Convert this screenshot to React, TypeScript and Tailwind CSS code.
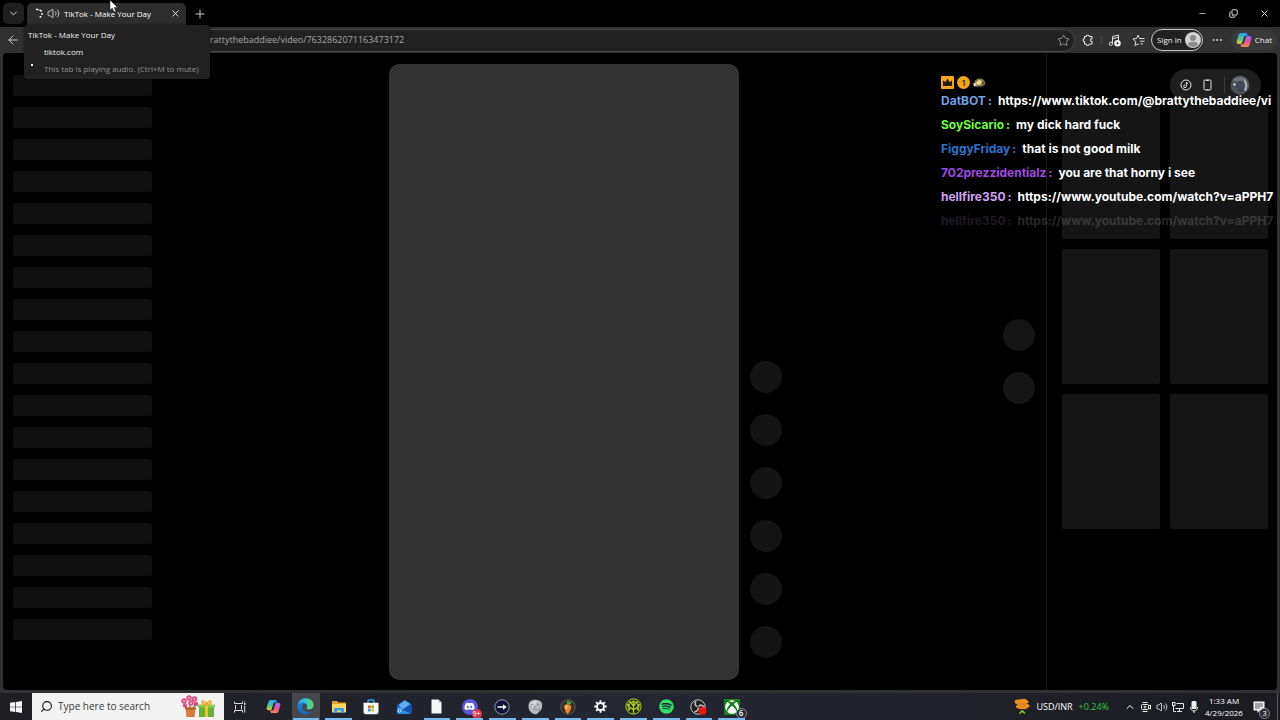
import type { ReactNode } from 'react';
import {
  ArrowLeft,
  ChevronDown,
  ChevronUp,
  Copy,
  Ellipsis,
  Minus,
  Plus,
  Search,
  Star,
  Volume2,
  X,
} from 'lucide-react';
import { FaDiscord, FaSpotify, FaXbox } from 'react-icons/fa';

const sidebarRows = Array.from({ length: 18 }, (_, i) => i);
const actionDots = Array.from({ length: 6 }, (_, i) => i);
const cards = Array.from({ length: 6 }, (_, i) => i);

interface ChatMessage {
  user: string;
  color: string;
  text: string;
  faded?: boolean;
}

const messages: ChatMessage[] = [
  { user: 'DatBOT', color: 'text-[#6ea0e0]', text: 'https://www.tiktok.com/@brattythebaddiee/vi' },
  { user: 'SoySicario', color: 'text-[#6dff3c]', text: 'my dick hard fuck' },
  { user: 'FiggyFriday', color: 'text-[#2a74cc]', text: 'that is not good milk' },
  { user: '702prezzidentialz', color: 'text-[#a04be0]', text: 'you are that horny i see' },
  { user: 'hellfire350', color: 'text-[#d2a0f5]', text: 'https://www.youtube.com/watch?v=aPPH7' },
  { user: 'hellfire350', color: 'text-[#d2a0f5]', text: 'https://www.youtube.com/watch?v=aPPH7', faded: true },
];

function CopilotIcon({ size }: { size: number }) {
  return (
    <svg width={size} height={size} viewBox="0 0 16 16">
      <defs>
        <linearGradient id="copilotLeft" x1="0" y1="0" x2="0" y2="1">
          <stop offset="0" stopColor="#2aa5f5" />
          <stop offset="0.55" stopColor="#4fc58a" />
          <stop offset="1" stopColor="#f2c52c" />
        </linearGradient>
        <linearGradient id="copilotRight" x1="0" y1="0" x2="0" y2="1">
          <stop offset="0" stopColor="#9a6cf5" />
          <stop offset="0.5" stopColor="#e8519b" />
          <stop offset="1" stopColor="#f98a4f" />
        </linearGradient>
      </defs>
      <path d="M5 1h4.5c1 0 1.6.7 1.9 1.7l.3 1.1H9.600c-1 0-1.500.5-1.800 1.400L6.200 10.600c-.3.9-.9 1.400-1.900 1.400H2.600C.9 12 .3 10.600.8 9l1.700-5.700C2.900 1.800 3.700 1 5 1z" fill="url(#copilotLeft)" />
      <path d="M11 15H6.500c-1 0-1.600-.7-1.900-1.700L4.300 12.200h2.100c1 0 1.500-.5 1.800-1.400l1.600-5.400c.3-.9.9-1.400 1.900-1.400h1.700c1.700 0 2.300 1.400 1.800 3l-1.700 5.700C13.100 14.200 12.300 15 11 15z" fill="url(#copilotRight)" />
      <path d="M9 1h.8c1 0 1.500.7 1.800 1.700l.4 1.300" fill="none" stroke="#2458c9" strokeWidth="1.200" />
    </svg>
  );
}

function WindowsIcon() {
  return (
    <svg width="12" height="12" viewBox="0 0 12 12" fill="#f5f5f5">
      <path d="M0 1.700 5.300 1v4.700H0zM6 .9 12 0v5.700H6zM0 6.300h5.300V11L0 10.300zM6 6.300h6V12l-6-.9z" />
    </svg>
  );
}

function TaskViewIcon() {
  return (
    <svg width="12" height="12" viewBox="0 0 12 12" fill="none" stroke="#dcdcdc" strokeWidth="1">
      <path d="M.5.5v2h8v-2M.5 11.500v-2h8v2M1.500 4v4.500M7.500 4v4.500M10.700 4.500v7M10.700.5v1" />
      <rect x="10" y="2" width="1.500" height="1.800" fill="#dcdcdc" stroke="none" />
    </svg>
  );
}

function EdgeIcon() {
  return (
    <svg width="17" height="17" viewBox="0 0 17 17">
      <defs>
        <linearGradient id="edgeTop" x1="0" y1="0.400" x2="1" y2="0.400">
          <stop offset="0" stopColor="#2aa0e8" />
          <stop offset="0.500" stopColor="#35c5cf" />
          <stop offset="1" stopColor="#5fdc5a" />
        </linearGradient>
        <linearGradient id="edgeLow" x1="0" y1="0" x2="1" y2="1">
          <stop offset="0" stopColor="#1d86d8" />
          <stop offset="1" stopColor="#1557a8" />
        </linearGradient>
      </defs>
      <path d="M.5 8.500C.5 3.500 4.200.3 8.700.3c4.800 0 7.900 3.300 7.900 6.800 0 2.600-2 4.300-4.300 4.300-1.900 0-2.800-.6-2.800-1.200 0-.4.700-.8.700-1.900 0-1.800-1.600-3.200-4-3.200-3 0-5.200 1.700-5.700 3.400z" fill="url(#edgeTop)" />
      <path d="M.5 8.500C.7 6.500 3 4.600 6 4.600c.9 0 1.700.2 2.400.5C6.300 5.800 5.300 7.500 5.300 9.300c0 3 2.800 4.900 5.900 4.900 1.500 0 2.900-.4 4-1.100-1.400 2.200-3.700 3.600-6.500 3.600C4.100 16.700.5 13.100.5 8.500z" fill="url(#edgeLow)" />
    </svg>
  );
}

function FolderIcon() {
  return (
    <svg width="16" height="14" viewBox="0 0 16 14">
      <path d="M1 2c0-.6.4-1 1-1h4l1.500 1.500H14c.6 0 1 .4 1 1V12H1z" fill="#e5a62b" />
      <path d="M1 4h14v8.500H1z" fill="#fbd665" />
      <path d="M3 13V9c0-.6.4-1 1-1h8c.6 0 1 .4 1 1v4h-3v-2.500H6V13z" fill="#3d9be0" />
    </svg>
  );
}

function StoreIcon() {
  return (
    <svg width="16" height="16" viewBox="0 0 16 16">
      <path d="M5 4V2c0-.6.4-1 1-1h4c.6 0 1 .4 1 1v2" fill="none" stroke="#2fa7e0" strokeWidth="1.400" />
      <path d="M.5 3.800h15V13c0 1.300-.9 2.200-2.200 2.200H2.700C1.400 15.200.5 14.300.5 13z" fill="#f6f6f6" />
      <path d="M5 6.500h2.700v2.700H5z" fill="#e8502a" />
      <path d="M8.300 6.500H11v2.700H8.300z" fill="#7db92a" />
      <path d="M5 9.800h2.700v2.700H5z" fill="#2da1e0" />
      <path d="M8.300 9.800H11v2.700H8.300z" fill="#f7b52c" />
    </svg>
  );
}

function MailIcon() {
  return (
    <svg width="16" height="16" viewBox="0 0 16 16">
      <path d="M1 6.500 8.500.8 15.500 5v9.500H1z" fill="#1b62c4" />
      <path d="M3 5.500 9 1.500 14 5l-8 6z" fill="#5db0f2" />
      <path d="M1 7.500 15.500 15H1z" fill="#2d8fe6" />
      <path d="M15.500 5.500V15L7 10.500z" fill="#134fae" />
      <circle cx="3.700" cy="11.600" r="3.200" fill="#1378d4" />
      <circle cx="3.700" cy="11.600" r="1.600" fill="none" stroke="#fff" strokeWidth="1" />
    </svg>
  );
}

function FileIcon() {
  return (
    <svg width="11" height="15" viewBox="0 0 11 15">
      <path d="M.5.5h7l3 3v11H.5z" fill="#f7f7f7" />
      <path d="M7.500.5v3h3z" fill="#bdbdbd" />
    </svg>
  );
}

function DiscordIcon() {
  return (
    <span className="relative flex h-4 w-4 items-center justify-center rounded-full bg-[#5b57d9]">
      <FaDiscord size={11} color="#fff" />
      <span className="absolute -right-1 -bottom-1 flex h-[10px] w-[10px] items-center justify-center rounded-full bg-[#d8344c] text-[7px] leading-none text-white">
        9+
      </span>
    </span>
  );
}

function ArrowCircleIcon() {
  return (
    <svg width="16" height="16" viewBox="0 0 16 16">
      <circle cx="8" cy="8" r="7.200" fill="#12123a" stroke="#a5a5c0" strokeWidth="0.900" />
      <path d="M3.500 8H11" stroke="#fff" strokeWidth="1.500" />
      <path d="M9 5.200 12.800 8 9 10.800z" fill="#fff" />
    </svg>
  );
}

function MaskIcon() {
  return (
    <svg width="15" height="16" viewBox="0 0 15 16">
      <path d="M2 2.500C4 .5 8 0 11 1.500c3 1 3.500 4 3 6.500-.3 2.500-2 4-3.500 5.500-1 1.500-3 2.300-4.500 1.500C3 14 .5 11 .5 7.500.5 5.500 1 3.500 2 2.500z" fill="#b9bbc0" />
      <path d="M3 4c2-1.800 4-2 6-1.500L7 6 4 8z" fill="#dcdde0" />
      <path d="M3 6c1-1 2.500-1 3 0M8.500 6c1-1 2.500-.8 3 0M5 11c1.300-1 3.200-1 4.500 0M7 7v2.500M11.500 9l-1 3" fill="none" stroke="#85888f" strokeWidth="0.900" />
    </svg>
  );
}

function FruitIcon() {
  return (
    <svg width="16" height="16" viewBox="0 0 16 16">
      <circle cx="8" cy="8" r="7.300" fill="#33312e" stroke="#68645d" strokeWidth="0.800" />
      <path d="M4.500 6.500c1.500-2 5.500-1.500 6.500.5.8 2-1.500 7-3.300 7.800C5.800 14 3.300 8.500 4.500 6.500z" fill="#f58220" />
      <path d="M5.500 7c1-.7 2-.5 2 .5s-.3 2.500-.8 3C6 10 5 8 5.500 7z" fill="#ffd1a0" />
      <path d="M7.500 5.500C6.500 3.500 7 1.800 8.500 1c.2 1.300.5 1.800 0 3 .8-1 2-1.800 3.300-1.500-.3 1.800-1.800 3-4.300 3z" fill="#59a93a" />
    </svg>
  );
}

function GearIcon() {
  return (
    <svg width="13" height="13" viewBox="0 0 16 16">
      <circle cx="8" cy="8" r="4.300" fill="none" stroke="#fff" strokeWidth="2.300" />
      <path d="M8 .4v3M8 12.600v3M.4 8h3M12.600 8h3M2.600 2.600l2.100 2.100M11.300 11.300l2.100 2.100M2.600 13.400l2.100-2.100M11.300 4.700l2.100-2.100" stroke="#fff" strokeWidth="2.300" />
    </svg>
  );
}

function TreeIcon() {
  return (
    <svg width="17" height="17" viewBox="0 0 17 17">
      <circle cx="8.500" cy="8.500" r="7.600" fill="#20280a" stroke="#b5d422" strokeWidth="1" />
      <path d="M8.500 15.500V5M8.500 12 4 8.500V5.500M8.500 12l4.500-3.500V5.500M8.500 8 6 5M8.500 8 11 5M4 8.500 2.500 9.500M13 8.500l1.500 1" fill="none" stroke="#b5d422" strokeWidth="1.200" />
      <g fill="#b5d422">
        <circle cx="8.500" cy="3.800" r="1.400" />
        <circle cx="5.300" cy="4.300" r="1.200" />
        <circle cx="11.700" cy="4.300" r="1.200" />
        <circle cx="3.300" cy="6.800" r="1.200" />
        <circle cx="13.700" cy="6.800" r="1.200" />
        <circle cx="4" cy="11.300" r="1.200" />
        <circle cx="13" cy="11.300" r="1.200" />
      </g>
    </svg>
  );
}

function ObsIcon() {
  return (
    <svg width="18" height="16" viewBox="0 0 18 16">
      <circle cx="8" cy="8" r="7.200" fill="#1f1f22" stroke="#c9c9c9" strokeWidth="1" />
      <path d="M7.500 7.500C5 7 4.300 4.500 6 2.300M8.500 7.500c1.500-2 4.200-1.700 5.500.5M8 8.500c.7 2.300-1 4.300-3.700 4.300" fill="none" stroke="#bdbdbd" strokeWidth="1.600" />
      <circle cx="12.500" cy="11.800" r="4" fill="#f01616" />
    </svg>
  );
}

function XboxIcon() {
  return (
    <span className="relative flex h-4 w-4 items-center justify-center bg-[#14801a]">
      <FaXbox size={14} color="#fff" />
      <span className="absolute -right-[7px] -bottom-1 flex h-[11px] w-[11px] items-center justify-center rounded-full border border-[#8b8b90] bg-[#2b2b31] text-[8px] leading-none font-semibold text-white">
        6
      </span>
    </span>
  );
}

function FlowersIcon() {
  return (
    <svg width="36" height="23" viewBox="0 0 36 23">
      <path d="M10 14V7M7 13 4 9M13 13l3-4" stroke="#4d9a3a" strokeWidth="1.300" />
      <g fill="#d94f83">
        <circle cx="4" cy="6" r="2.700" />
        <circle cx="9" cy="3" r="2.700" />
        <circle cx="14.500" cy="4" r="2.700" />
        <circle cx="11" cy="8" r="2.700" />
        <circle cx="5" cy="10.500" r="2.200" />
        <circle cx="16" cy="9" r="2.300" />
      </g>
      <g fill="#f5b3ca">
        <circle cx="4" cy="6" r="1" />
        <circle cx="9" cy="3" r="1" />
        <circle cx="14.500" cy="4" r="1" />
        <circle cx="11" cy="8" r="1" />
      </g>
      <path d="M5.500 12.500h10L14.500 22h-8z" fill="#d9793a" />
      <path d="M5 12.500h11v2H5z" fill="#b85c25" />
      <path d="M19 11h15v11H19z" fill="#64b13c" />
      <path d="M18 9.500h17v3H18z" fill="#88cc4b" />
      <path d="M25 9.500h3V22h-3z" fill="#f2c230" />
      <path d="M26.500 9.500C23 9.500 21 8 22 6.500s3.500 0 4.500 3c1-3 3.500-4.500 4.500-3s-1 3-4.500 3z" fill="none" stroke="#e7a926" strokeWidth="1.400" />
    </svg>
  );
}

function CoinsIcon() {
  return (
    <svg width="16" height="17" viewBox="0 0 16 17">
      <path d="M1.500 1.800 11 .8l3.500 2.500v1.500L12.500 5.500 15.500 7v1.500L12 11H5L2 9.500V7.800L4 7 .8 5V3z" fill="#ec8f20" />
      <path d="M3 5.700c3 .6 6 .6 9 0M4.500 8.700c2.500.5 5 .5 7.500 0" fill="none" stroke="#bd6a12" strokeWidth="0.600" />
      <path d="m5.500 15.500 2.700-2.700 2.700 2.700" fill="none" stroke="#7cc61c" strokeWidth="1.700" />
    </svg>
  );
}

function AppButton({ label, open, active, children }: { label: string; open?: boolean; active?: boolean; children: ReactNode }) {
  return (
    <button
      aria-label={label}
      className={`relative mx-[2px] flex h-full flex-1 items-center justify-center ${active ? 'bg-[#46474c]' : ''}`}
    >
      {children}
      {open && <span className="absolute inset-x-px bottom-0 h-[2px] bg-[#76b9ed]" />}
    </button>
  );
}

function TabStrip() {
  return (
    <header className="flex h-[27px] shrink-0 items-center bg-black pl-[3px] text-[#e6e6e6]">
      <button aria-label="Tab actions" className="flex h-[21px] w-[21px] items-center justify-center rounded-[5px] bg-[#1f1f1f]">
        <ChevronDown size={11} strokeWidth={2} />
      </button>
      <div className="ml-[3px] flex h-6 w-[159px] items-center self-end rounded-t-[5px] bg-[#2d2d2d] pr-[5px] pb-[3px] pl-[7px]">
        <svg width="11" height="11" viewBox="0 0 11 11" fill="none" stroke="#f2f2f2" strokeWidth="1.500">
          <path d="M2 1.500h2.500M5.500 1.800 7.800 3.400M8 5v2M7.300 8.300l-1.700 1" />
        </svg>
        <Volume2 size={13} strokeWidth={1.500} className="ml-[2px]" />
        <span className="ml-1 flex-1 text-[8px] whitespace-nowrap text-white">TikTok - Make Your Day</span>
        <button aria-label="Close tab">
          <X size={11} strokeWidth={2} />
        </button>
      </div>
      <button aria-label="New tab" className="ml-[7px]">
        <Plus size={14} strokeWidth={1.500} />
      </button>
      <div className="ml-auto flex items-center">
        <button aria-label="Minimize" className="flex w-[31px] justify-center">
          <Minus size={9} strokeWidth={2} />
        </button>
        <button aria-label="Restore" className="flex w-[31px] justify-center">
          <Copy size={9} strokeWidth={2.500} className="-scale-x-100 rotate-180" />
        </button>
        <button aria-label="Close" className="flex w-[31px] justify-center">
          <X size={11} strokeWidth={2} />
        </button>
      </div>
    </header>
  );
}

function Toolbar() {
  return (
    <div className="flex h-[26px] shrink-0 items-center bg-[#313131] pr-[3px] pl-[6px] text-[#dedede]">
      <button aria-label="Back">
        <ArrowLeft size={14} strokeWidth={1.500} />
      </button>
      <div className="ml-2 flex h-[23px] flex-1 items-center rounded-full border border-[#474747] bg-[#212121] pr-1">
        <input
          aria-label="Address"
          readOnly
          value="https://www.tiktok.com/@brattythebaddiee/video/7632862071163473172"
          className="min-w-0 flex-1 bg-transparent pl-[66px] text-[9px] text-[#a5a5a5] outline-none"
        />
        <button aria-label="Add to favorites">
          <Star size={13} strokeWidth={1.500} className="text-[#a5a5a5]" />
        </button>
      </div>
      <button aria-label="Extensions" className="ml-[7px]">
        <svg width="12" height="12" viewBox="0 0 12 12" fill="none" stroke="currentColor" strokeWidth="1.100" strokeLinejoin="round">
          <path d="M2.500 2.500H4.300a1.500 1.500 0 0 1 3 0H10V4.600a1.500 1.500 0 0 0 0 3V10H7.300a1.500 1.500 0 0 1-3 0H2.500V7.600a1.500 1.500 0 0 1 0-3z" />
        </svg>
      </button>
      <span className="ml-[7px] h-2 w-px bg-[#484848]" />
      <button aria-label="Media" className="ml-[6px]">
        <svg width="13" height="13" viewBox="0 0 13 13" fill="none" stroke="currentColor" strokeWidth="1">
          <path d="M4.500 9.500V2.500L10.500 1v5M4.500 4.700 10.500 3.200" />
          <circle cx="2.900" cy="9.800" r="1.600" />
          <circle cx="9.500" cy="9.300" r="3.200" fill="#fff" stroke="none" />
          <path d="M8.700 7.800v3l2.300-1.500z" fill="#222" stroke="none" />
        </svg>
      </button>
      <button aria-label="Favorites" className="ml-[11px]">
        <svg width="13" height="13" viewBox="0 0 13 13" fill="none" stroke="currentColor" strokeWidth="1" strokeLinejoin="round">
          <path d="M7.500 4.500 6 1.200 4.500 4.500 1 5l2.600 2.500L3 11.500l3-1.700.8.5M7.500 4.500h5M8 7.200h4.500M8.500 9.900H11" />
        </svg>
      </button>
      <button className="ml-[6px] flex h-[22px] items-center gap-[3px] rounded-full border border-[#c8c8c8] bg-[#212121] pr-px pl-[5px] text-[8px] text-[#f0f0f0]">
        Sign in
        <svg width="16" height="16" viewBox="0 0 16 16">
          <circle cx="8" cy="8" r="8" fill="#d3d3d3" />
          <circle cx="8" cy="6" r="3" fill="#8d8d8d" />
          <path d="M3 13c0-2.300 1.700-3.300 5-3.300s5 1 5 3.300c-1.400 1.300-3 2-5 2s-3.600-.7-5-2z" fill="#8d8d8d" />
        </svg>
      </button>
      <button aria-label="Settings and more" className="ml-2">
        <Ellipsis size={12} strokeWidth={2} />
      </button>
      <button className="ml-2 flex h-5 items-center gap-[3px] rounded-full bg-[#393939] px-[5px] text-[8px] text-[#f0f0f0]">
        <CopilotIcon size={16} />
        Chat
      </button>
    </div>
  );
}

function TabTooltip() {
  return (
    <div className="absolute top-[25px] left-6 z-20 h-[54px] w-[186px] rounded-[4px] bg-[#212121] pl-1 text-[8px] leading-[17px] text-[#f0f0f0] shadow-[0_0_3px_rgba(0,0,0,0.6)]">
      <p className="pt-px">TikTok - Make Your Day</p>
      <p className="pl-4">tiktok.com</p>
      <p className="flex text-[#8f8f8f]">
        <span className="mt-1 ml-[3px] h-[2px] w-[2px] bg-white" />
        <span className="ml-[11px] whitespace-nowrap">This tab is playing audio. (Ctrl+M to mute)</span>
      </p>
    </div>
  );
}

function ProfilePill() {
  return (
    <div className="absolute top-4 right-4 flex h-8 w-[91px] items-center rounded-full bg-[#1e1e1e] pl-[10px]">
      <button aria-label="Get coins">
        <svg width="12" height="12" viewBox="0 0 12 12" fill="none" stroke="#e6e6e6" strokeWidth="1">
          <circle cx="6" cy="6" r="5" />
          <path d="M6.300 3v4.300a1.300 1.300 0 1 1-1.300-1.300M6.300 3c.2 1 .8 1.500 1.800 1.600" />
        </svg>
      </button>
      <button aria-label="Get app" className="ml-[11px]">
        <svg width="9" height="12" viewBox="0 0 9 12" fill="none" stroke="#e6e6e6" strokeWidth="1">
          <rect x="1" y="1" width="7" height="10" rx="1.200" />
          <path d="M3.500 1.500h2M3.500 10.500h2" />
        </svg>
      </button>
      <span className="ml-3 h-4 w-px bg-[#3a3a3a]" />
      <button aria-label="Profile" className="ml-[5px]">
        <svg width="20" height="20" viewBox="0 0 20 20">
          <circle cx="10" cy="10" r="9.500" fill="#4e5156" />
          <path d="M3 5c3-3.500 9-4 12-1.500l-3 3H5z" fill="#6e737a" />
          <path d="M6 8.500C7 6 11 5 13 7.500l1 7.500-4 2.500L7 15z" fill="#3a4454" />
          <path d="M14 3.500c4 3 4.500 9 1.500 13L14 14.500c1.500-3 1.500-6 0-8z" fill="#a9b0b8" />
          <circle cx="4.500" cy="9.500" r="1.200" fill="#d0d4d8" />
          <path d="M9 8v6M11.500 8.500v5" stroke="#56637a" strokeWidth="0.600" />
        </svg>
      </button>
    </div>
  );
}

function ChatOverlay() {
  return (
    <section aria-label="Live chat" className="absolute top-[76px] right-0 z-10 w-[339px] font-['Inter',sans-serif] text-[12px] font-bold text-white">
      <div className="flex h-[13px] items-center gap-[3px]">
        <svg width="13" height="13" viewBox="0 0 13 13">
          <rect width="13" height="13" rx="1" fill="#f7a51c" />
          <path d="M2 4.500 4.500 6 6.500 2.500 8.500 6 11 4.500V10H2z" fill="#2b1a05" />
        </svg>
        <span className="flex h-[13px] w-[13px] items-center justify-center rounded-full bg-[#f5a51c] text-[8px] leading-none text-[#4a2c05]">1</span>
        <svg width="13" height="11" viewBox="0 0 13 11">
          <path d="M1 7C1 3.500 4 1 7.500 1.500c3 .3 5 2.800 5 6L9 9.500H3z" fill="#8b7b46" />
          <path d="M3 5.500 6 3l3 1-1.500 3.500-3 .5z" fill="#f2dc8c" />
          <path d="M0 6.500 3 6l.5 3-2.500.5z" fill="#d6d6c3" />
          <path d="M9.500 4c1.500.5 2.500 1.800 2.500 3.500H9z" fill="#4d5a34" />
        </svg>
      </div>
      {messages.map((message, index) => (
        <p key={index} className={`h-6 leading-[23px] whitespace-nowrap ${message.faded ? 'opacity-15' : ''}`}>
          <span className={message.color}>{message.user}</span>
          <span className={`mr-[6px] ml-[2px] ${message.color}`}>:</span>
          {message.text}
        </p>
      ))}
    </section>
  );
}

function Taskbar() {
  return (
    <footer className="flex h-[27px] shrink-0 items-center bg-linear-to-r from-[#1d1d22] via-[#242632] to-[#1b1b21] text-[9px] text-white">
      <button aria-label="Start" className="flex h-full w-8 items-center justify-center">
        <WindowsIcon />
      </button>
      <label className="flex h-full w-48 items-center bg-[#f2f2f2] pr-[8px] pl-2 text-[#111]">
        <Search size={13} strokeWidth={2} className="-scale-x-100" />
        <input
          aria-label="Search"
          placeholder="Type here to search"
          className="ml-[5px] min-w-0 flex-1 bg-transparent text-[10px] outline-none placeholder:text-[#3a3a3a]"
        />
        <FlowersIcon />
      </label>
      <nav className="flex h-full w-[524px] items-center">
        <AppButton label="Task view"><TaskViewIcon /></AppButton>
        <AppButton label="Copilot"><CopilotIcon size={15} /></AppButton>
        <AppButton label="Edge" open active><EdgeIcon /></AppButton>
        <AppButton label="File Explorer" open><FolderIcon /></AppButton>
        <AppButton label="Store"><StoreIcon /></AppButton>
        <AppButton label="Mail"><MailIcon /></AppButton>
        <AppButton label="Document" open><FileIcon /></AppButton>
        <AppButton label="Discord" open><DiscordIcon /></AppButton>
        <AppButton label="Launcher" open><ArrowCircleIcon /></AppButton>
        <AppButton label="Game" open><MaskIcon /></AppButton>
        <AppButton label="Music studio" open><FruitIcon /></AppButton>
        <AppButton label="Settings" open><GearIcon /></AppButton>
        <AppButton label="Tree" open><TreeIcon /></AppButton>
        <AppButton label="Spotify" open><FaSpotify size={15} color="#2ee06a" /></AppButton>
        <AppButton label="Recorder" open><ObsIcon /></AppButton>
        <AppButton label="Xbox" open><XboxIcon /></AppButton>
      </nav>
      <div className="ml-auto flex h-full items-center">
        <button className="flex items-center">
          <CoinsIcon />
          <span className="ml-[6px]">USD/INR</span>
          <span className="ml-[6px] text-[#35c83c]">+0.24%</span>
        </button>
        <button aria-label="Show hidden icons" className="ml-[15px]">
          <ChevronUp size={12} strokeWidth={2} />
        </button>
        <div className="ml-1 flex items-center gap-1">
          <svg width="12" height="12" viewBox="0 0 12 12" fill="none" stroke="#e6e6e6" strokeWidth="1">
            <rect x="1.500" y="3.500" width="7" height="5" rx="1" />
            <path d="M8.500 5 10.500 4v4l-2-1M2.500 1.500h5M2.500 10.500h5" />
            <circle cx="5" cy="6" r="1" />
          </svg>
          <Volume2 size={12} strokeWidth={1.500} />
          <svg width="12" height="12" viewBox="0 0 12 12" fill="none" stroke="#e6e6e6" strokeWidth="1">
            <path d="M4.500 2.500h7v5h-8M7.500 7.500v3M5 10.500h5M1.500 5v5.500H4" />
            <rect x=".5" y="1.500" width="2.500" height="3" />
          </svg>
          <svg width="12" height="12" viewBox="0 0 12 12" fill="#f0f0f0">
            <rect x="3.500" y="0" width="5" height="8" rx="1.500" />
            <path d="M2.500 6c0 2.500 1.500 4 3.500 4s3.500-1.500 3.500-4" fill="none" stroke="#f0f0f0" />
            <path d="M5.500 10h1v2h-1z" />
          </svg>
        </div>
        <div className="ml-[4px] w-10 text-center text-[8px] leading-3">
          <p>1:33 AM</p>
          <p>4/29/2026</p>
        </div>
        <button aria-label="Notifications" className="relative mr-[10px] ml-[7px] flex h-4 w-4 items-center justify-center">
          <svg width="12" height="12" viewBox="0 0 12 12">
            <path d="M.5.5h11v9H7L4.500 12V9.500h-4z" fill="#f3f3f3" />
            <path d="M2 3h8M2 5h8M2 7h5" stroke="#2a2a30" strokeWidth="0.800" />
          </svg>
          <span className="absolute -right-[3px] -bottom-1 flex h-[11px] w-[11px] items-center justify-center rounded-full border border-[#8b8b90] bg-[#2b2b31] text-[8px] leading-none">
            3
          </span>
        </button>
        <span className="h-full w-[3px] border-l border-[#55555c]" />
      </div>
    </footer>
  );
}

export default function App() {
  return (
    <div className="relative flex h-screen flex-col overflow-hidden bg-black font-['Open_Sans',sans-serif]">
      <TabStrip />
      <Toolbar />
      <div className="flex min-h-0 flex-1 bg-[#313131] px-[3px] pb-[3px]">
        <main className="relative flex min-w-0 flex-1 overflow-hidden rounded-[4px] bg-black">
          <aside className="flex w-[164px] shrink-0 flex-col gap-[11px] pt-[22px] pr-[15px] pl-[10px]">
            {sidebarRows.map((row) => (
              <div key={row} className="h-[21px] shrink-0 rounded-[2px] bg-[#101010]" />
            ))}
          </aside>
          <div className="flex min-w-0 flex-1 justify-center gap-[11px] pt-[11px] pb-[10px]">
            <div className="w-[350px] rounded-[10px] bg-[#333333]" />
            <div className="flex flex-col justify-end gap-[21px] pb-[22px]">
              {actionDots.map((dot) => (
                <div key={dot} className="h-8 w-8 rounded-full bg-[#141414]" />
              ))}
            </div>
          </div>
          <div className="flex w-[43px] shrink-0 flex-col justify-center gap-[21px] pb-5">
            <div className="h-8 w-8 rounded-full bg-[#151515]" />
            <div className="h-8 w-8 rounded-full bg-[#151515]" />
          </div>
          <aside className="w-[231px] shrink-0 border-l border-[#1c1c1c] pt-[51px] pr-[9px] pl-[15px]">
            <div className="grid grid-cols-2 gap-[10px]">
              {cards.map((card) => (
                <div key={card} className="h-[135px] rounded-[2px] bg-[#151515]" />
              ))}
            </div>
          </aside>
          <ProfilePill />
        </main>
      </div>
      <Taskbar />
      <TabTooltip />
      <ChatOverlay />
      <svg className="absolute top-0 left-[109px] z-30" width="10" height="13" viewBox="0 0 10 13">
        <path d="M1 0v10l2.300-2 1.700 4 1.800-.8L5.200 7.500H8.500z" fill="#fff" stroke="#222" strokeWidth="0.500" />
      </svg>
    </div>
  );
}
